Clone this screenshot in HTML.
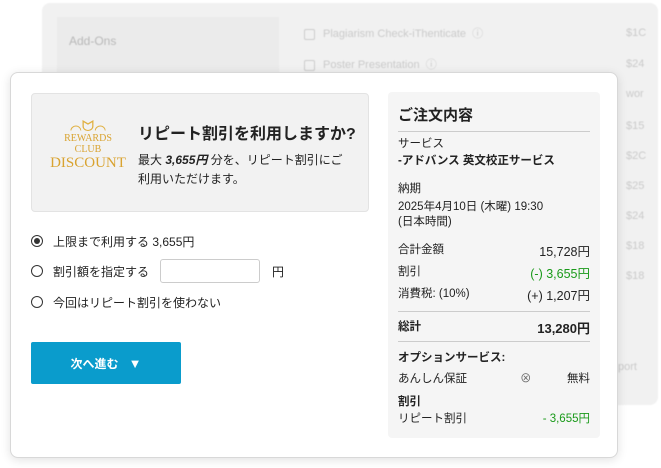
<!DOCTYPE html>
<html><head><meta charset="utf-8"><style>
*{box-sizing:border-box;margin:0;padding:0}
body{width:661px;height:468px;background:#fff;font-family:"Liberation Sans","Noto Sans CJK JP",sans-serif;color:#222;position:relative;overflow:hidden}
.bg{position:absolute;left:42px;top:3px;width:616px;height:402px;background:#f1f1f1;border-radius:8px;filter:blur(0.6px);color:#cacaca;font-size:11px}
.bg .l{position:absolute;left:15px;top:14px;width:222px;height:60px;background:#ebebeb}
.bg .t{position:absolute}
.cb{display:inline-block;width:11px;height:11px;border:1px solid #ccc;border-radius:2px;vertical-align:middle;margin-right:8px}
.card{position:absolute;left:10px;top:72px;width:608px;height:386px;background:#fff;border:1px solid #d8d8d8;border-radius:8px;box-shadow:0 2px 10px rgba(0,0,0,.12)}
.promo{position:absolute;left:20px;top:20px;width:338px;height:119px;background:#f2f2f2;border:1px solid #e3e3e3;border-radius:4px}
.logo{position:absolute;left:14px;top:28px;width:84px;text-align:center;font-family:"Liberation Serif",serif;color:#d9a330;line-height:11px}
.radio{position:absolute;left:20px;height:20px;font-size:12px;display:flex;align-items:center}
.r{width:12px;height:12px;border:1px solid #333;border-radius:50%;margin-right:10px;position:relative}
.r.on:after{content:"";position:absolute;left:2px;top:2px;width:6px;height:6px;border-radius:50%;background:#333}
.btn{position:absolute;left:20px;top:269px;width:150px;height:42px;background:#0a9ccc;color:#fff;font-size:12px;font-weight:bold;display:flex;align-items:center;justify-content:center;border-radius:2px}
.sum{position:absolute;left:377px;top:19px;width:212px;height:346px;background:#f5f5f5;border-radius:4px;font-size:11.5px}
.row{position:absolute;left:10px;right:10px;display:flex;justify-content:space-between}
.hr{position:absolute;left:10px;right:10px;height:1px;background:#ccc}
.g{color:#1a9a1a}
</style></head><body>
<div class="bg">
<div class="l"><span style="position:absolute;left:12px;top:17px;font-size:12px;color:#b8b8b8">Add-Ons</span></div>
<div class="t" style="left:262px;top:22px"><span class="cb"></span>Plagiarism Check-iThenticate &nbsp;ⓘ</div>
<div class="t" style="left:262px;top:53px"><span class="cb"></span>Poster Presentation &nbsp;ⓘ</div>
<div class="t" style="left:584px;top:24px">$1C</div>
<div class="t" style="left:584px;top:55px">$24</div>
<div class="t" style="left:584px;top:85px">wor</div>
<div class="t" style="left:584px;top:117px">$15</div>
<div class="t" style="left:584px;top:147px">$2C</div>
<div class="t" style="left:584px;top:177px">$25</div>
<div class="t" style="left:584px;top:207px">$24</div>
<div class="t" style="left:584px;top:237px">$18</div>
<div class="t" style="left:584px;top:267px">$18</div>
<div class="t" style="left:576px;top:358px">port</div>
</div>
<div class="card">
<div class="promo">
<div class="logo"><div style="font-size:15px;color:#e0b040">⌒ᗢ⌒</div><div style="font-size:10px">REWARDS</div><div style="font-size:10px">CLUB</div><div style="font-size:15px;line-height:17px">DISCOUNT</div></div>
<div style="position:absolute;left:106px;top:26px;font-size:16px;font-weight:bold">リピート割引を利用しますか?</div>
<div style="position:absolute;left:106px;top:57px;font-size:12px;line-height:19px;width:215px">最大 <b><i>3,655円</i></b> 分を、リピート割引にご利用いただけます。</div>
</div>
<div class="radio" style="top:158px"><span class="r on"></span>上限まで利用する 3,655円</div>
<div class="radio" style="top:188px"><span class="r"></span>割引額を指定する<span style="display:inline-block;width:100px;height:24px;border:1px solid #ccc;border-radius:3px;margin:0 12px 0 11px"></span>円</div>
<div class="radio" style="top:219px"><span class="r"></span>今回はリピート割引を使わない</div>
<div class="btn">次へ進む&nbsp;&nbsp;&nbsp;<span style="font-size:13px">▼</span></div>
<div class="sum">
<div style="position:absolute;left:10px;top:12px;font-size:15px;font-weight:bold">ご注文内容</div>
<div class="hr" style="top:39px"></div>
<div style="position:absolute;left:10px;top:44px;line-height:17px">サービス<br><b>-アドバンス 英文校正サービス</b></div>
<div style="position:absolute;left:10px;top:88px">納期</div>
<div style="position:absolute;left:10px;top:108px;line-height:15px">2025年4月10日 (木曜) 19:30<br>(日本時間)</div>
<div class="row" style="top:149px"><span>合計金額</span><span style="font-size:12.5px">15,728円</span></div>
<div class="row" style="top:171px"><span>割引</span><span class="g" style="font-size:12.5px">(-) 3,655円</span></div>
<div class="row" style="top:193px"><span>消費税: (10%)</span><span style="font-size:12.5px">(+) 1,207円</span></div>
<div class="hr" style="top:219px"></div>
<div class="row" style="top:226px;font-weight:bold"><span>総計</span><span style="font-size:13px">13,280円</span></div>
<div class="hr" style="top:249px"></div>
<div style="position:absolute;left:10px;top:257px;font-weight:bold">オプションサービス:</div>
<div class="row" style="top:278px"><span>あんしん保証</span><span style="position:absolute;left:122px;color:#666">⊗</span><span>無料</span></div>
<div style="position:absolute;left:10px;top:301px;font-weight:bold">割引</div>
<div class="row" style="top:318px"><span>リピート割引</span><span class="g">- 3,655円</span></div>
</div>
</div>
</body></html>
